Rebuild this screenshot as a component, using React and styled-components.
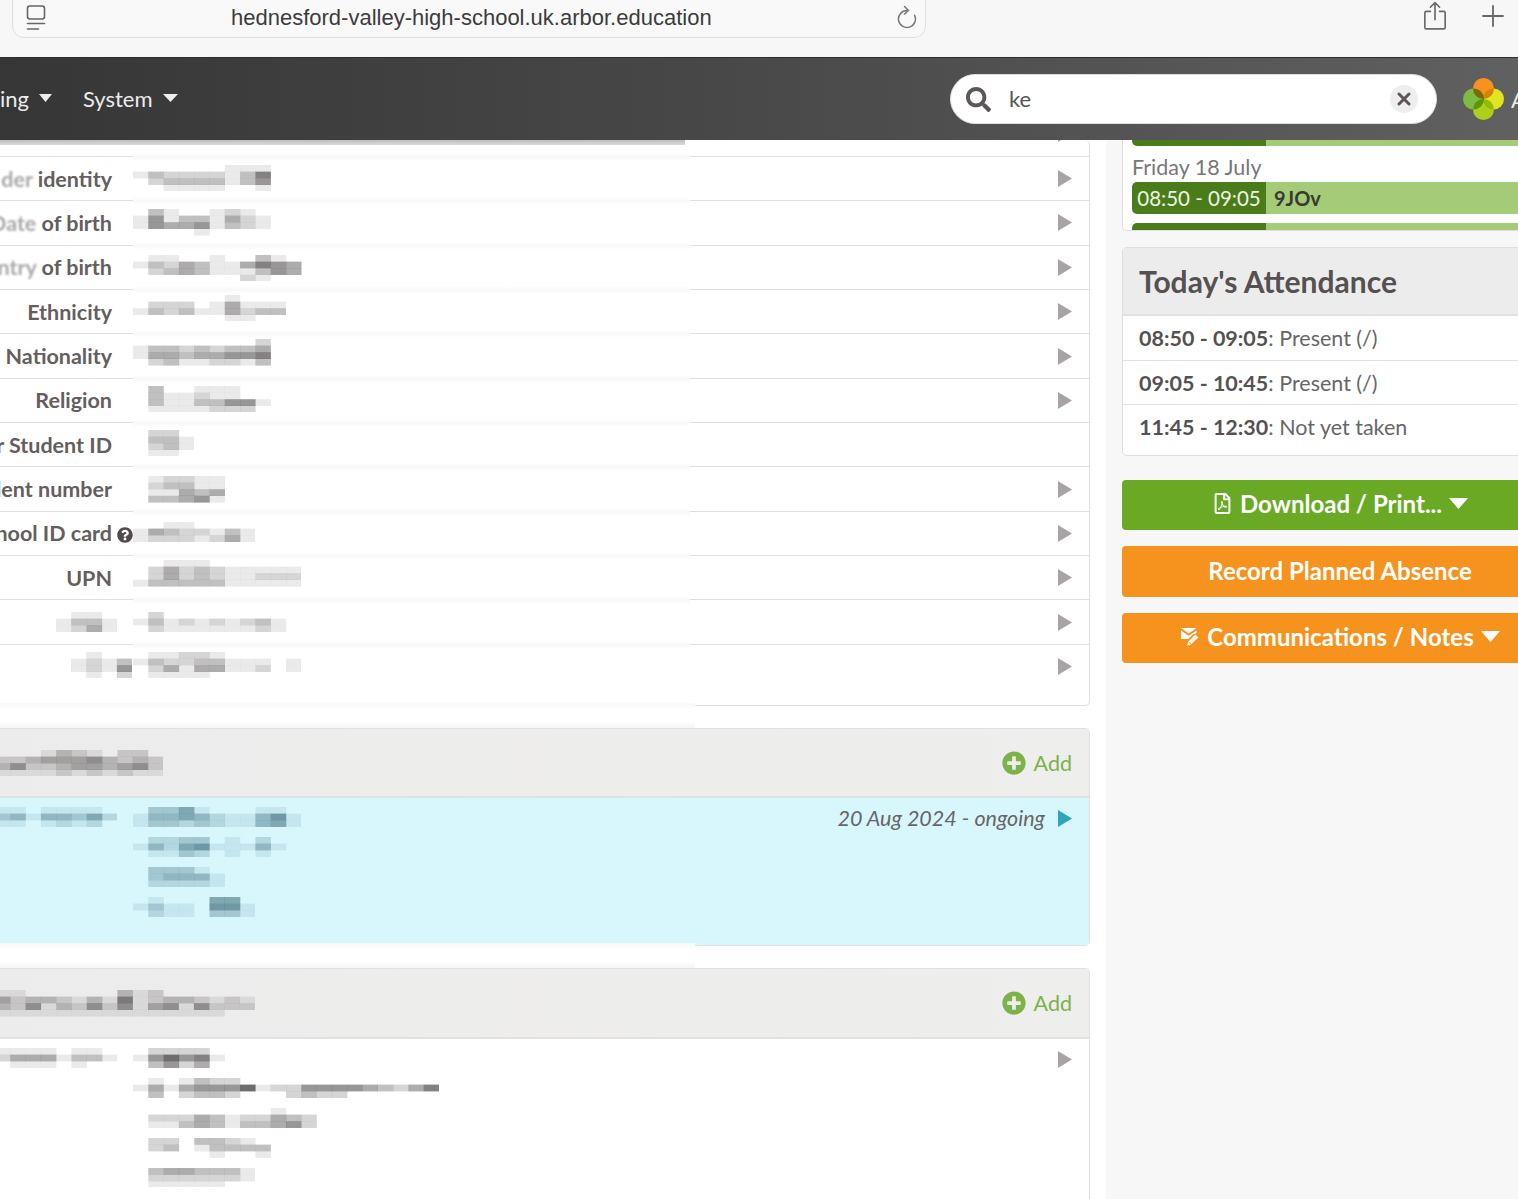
import React from 'react';
import styled, { createGlobalStyle } from 'styled-components';
import { FaSearch, FaPlusCircle, FaQuestionCircle, FaRegFilePdf } from 'react-icons/fa';

const Global = createGlobalStyle`
  html, body { margin: 0; padding: 0; background: #fff; }
  * { box-sizing: border-box; }
`;
const FONT = `"Lato", "Open Sans", sans-serif`;

const Page = styled.div`
  width: 1518px; height: 1199px; overflow: hidden;
  display: flex; flex-direction: column;
  font-family: ${FONT}; font-size: 21.5px; color: #666;
`;
const BrowserBar = styled.div`
  height: 58px; flex: none; background: #f7f7f7; border-bottom: 1px solid #2c2c2c;
  display: flex; align-items: flex-start; padding-left: 12px; color: #666;
`;
const Address = styled.div`
  width: 914px; height: 49px; margin-top: -11px; border: 1px solid #dfdfdf; border-radius: 12px;
  display: flex; align-items: center; padding: 9px 8px 0 12px; background: #f9f9f9;
`;
const Url = styled.span`
  font-family: "Liberation Sans", Arial, sans-serif; font-size: 22px; color: #3c3c3c;
  margin-left: 184px; flex: 1; white-space: nowrap;
`;
const ToolBtn = styled.div`
  display: flex; margin-left: ${p => p.$ml}px; margin-top: ${p => p.$mt}px;
`;
const Header = styled.header`
  height: 82px; flex: none; overflow: hidden; display: flex; align-items: center;
  background: linear-gradient(90deg, #363636, #494949 50%, #606060);
  color: #ececec;
`;
const NavItem = styled.div`
  display: flex; align-items: center; gap: 10px; margin: -2px 0 0 ${p => p.$ml}px; font-size: 22px;
`;
const Search = styled.div`
  margin-left: auto; width: 487px; height: 50px; background: #fff; border-radius: 25px;
  border: 1px solid #ddd; display: flex; align-items: center; padding: 0 18px 0 15px; color: #5c5656;
`;
const SearchText = styled.span` flex: 1; margin: -1px 0 0 18px; font-size: 22px; color: #555; `;
const Clear = styled.div`
  width: 28px; height: 28px; border-radius: 50%; background: #efeeee;
  display: flex; align-items: center; justify-content: center;
`;
const Logo = styled.svg` margin-left: 26px; flex: none; isolation: isolate; `;
const LogoLeaf = styled.circle` mix-blend-mode: multiply; `;
const Clip = styled.div` margin-left: 7px; font-size: 22px; width: 7px; overflow: hidden; `;

const Content = styled.div` flex: 1; display: flex; min-height: 0; `;
const Main = styled.main` width: 1106px; flex: none; background: #fff; overflow: hidden; `;
const Aside = styled.aside` flex: 1; min-width: 0; background: #f7f7f7; padding-left: 16px; `;

const Card = styled.section`
  width: 1092px; margin-left: -2px; background: #fff;
  border: 1px solid #e2e0e0; border-radius: 0 5px 5px 0;
  ${p => p.$top ? 'border-top: 0;' : ''}
  ${p => p.$open ? 'border-bottom: 0; border-radius: 0 5px 0 0;' : ''}
  overflow: hidden;
`;
const BlurBand = styled.div`
  width: 697px; height: ${p => p.$h}px; margin-top: -3px; margin-left: -2px; position: relative;
  background: linear-gradient(#f8f8f8, #fff 7px, #fff calc(100% - 7px), #f5f5f5);
`;
const Grid = styled.div`
  display: grid; grid-template-columns: 134px 557px 1fr;
`;
const Row = styled(Grid)`
  height: ${p => p.$h || 44.36}px;
`;
const LabelCell = styled.div`
  position: relative; display: flex; align-items: ${p => p.$pxTop !== undefined ? 'flex-start' : 'center'};
  justify-content: flex-end; white-space: nowrap;
  padding: ${p => p.$pxTop || 0}px ${p => p.$pr || 21}px 0 0; font-weight: 700; color: #645e5e; overflow: hidden;
  border-bottom: ${p => p.$last ? '0' : '1px solid #e3dede'};
`;
const Faded = styled.span` filter: blur(1.2px); opacity: .55; `;
const ValueCell = styled.div`
  display: flex; align-items: flex-start; padding-top: ${p => p.$pt}px;
  background: linear-gradient(#f8f8f8, #fff 4px, #fff calc(100% - 4px), #f8f8f8);
`;
const ActionCell = styled.div`
  display: flex; align-items: ${p => p.$start ? 'flex-start' : 'center'}; justify-content: flex-end; padding: ${p => p.$start ? 13 : 0}px 17px 0 0;
  border-bottom: ${p => p.$last ? '0' : '1px solid #e3dede'};
`;
const StripeCell = styled.div`
  display: flex; flex-direction: column; background: linear-gradient(#fff, #fff calc(100% - 4px), #f8f8f8);
`;
const Stripe = styled.div`
  height: 5px; width: 552px; background: linear-gradient(#bdbbbb, #dcdcdc);
`;
const LabelStripe = styled(Stripe)` width: 100%; position: absolute; top: 0; left: 0; `;
const PeekChevron = styled.div` margin-top: -28px; `;
const PixelSvg = styled.svg` display: block; flex: none; filter: blur(.7px); `;

const CardHead = styled.div`
  height: ${p => p.$h}px; border-bottom: 2px solid #e2e0e0;
  display: flex; align-items: center; justify-content: space-between; padding-right: 17px;
  background: linear-gradient(90deg, #edecec, #eeeeec);
`;
const HeadTitle = styled.div` margin-left: -4px; `;
const AddLink = styled.div`
  display: flex; align-items: center; gap: 8px; color: #7db249; font-size: 21.5px;
`;
const BodyRow = styled(Grid)`
  background: ${p => p.$bg || '#fff'};
  height: ${p => p.$h}px;
`;
const BodyLabel = styled.div` display: flex; justify-content: flex-end; padding: ${p => p.$pt}px 16px 0 0; `;
const Stack = styled.div` display: flex; flex-direction: column; gap: 10px; padding-top: ${p => p.$pt}px; `;
const BodyAction = styled.div`
  display: flex; justify-content: flex-end; align-items: center; align-self: flex-start; gap: 13px;
  padding: ${p => p.$pt}px 17px 0 0; 
`;
const DateRange = styled.span` font-style: italic; color: #666; white-space: nowrap; line-height: 24px; `;

const SideCard = styled.section`
  width: 430px; border: 1px solid #dfdddd; border-radius: 5px; background: #fff; overflow: hidden;
  ${p => p.$peek ? 'border-top: 0; border-radius: 0 0 5px 5px; height: 91px; margin-bottom: 16px; padding-left: 9px;' : ''}
`;
const Slot = styled.div`
  display: flex; height: ${p => p.$h}px; width: 420px; overflow: hidden; border-radius: ${p => p.$r};
  margin-top: ${p => p.$mt || 0}px;
`;
const SlotTime = styled.div`
  width: 134px; flex: none; background: #4a7d1a; color: #eef5e4; display: flex; align-items: center;
  justify-content: center; white-space: nowrap; font-size: 20.5px;
`;
const SlotName = styled.div`
  flex: 1; background: #a4cb78; color: #3a3a30; font-weight: 700; display: flex; align-items: center; padding-left: 8px; font-size: 20px;
`;
const DayLabel = styled.div` height: 36px; display: flex; align-items: flex-end; line-height: 26px; color: #777; padding-bottom: 2px; `;
const SideHead = styled.div`
  height: 68px; background: #edecec; border-bottom: 2px solid #e2e0e0; padding-left: 16px;
  display: flex; align-items: center; font-size: 30px; font-weight: 700; color: #565151;
`;
const AttRow = styled.div`
  height: ${p => p.$h}px; padding: 0 0 ${p => p.$pb || 0}px 16px; display: flex; align-items: center; color: #666; white-space: pre;
  border-bottom: ${p => p.$last ? '0' : '1px solid #e2e0e0'};
`;
const Strong = styled.strong` font-weight: 700; color: #565151; `;
const Action = styled.button`
  display: flex; align-items: center; justify-content: center; gap: 7px;
  width: 436px; height: 50.3px; margin-top: ${p => p.$mt}px; border: 0; border-radius: 4px;
  background: ${p => p.$bg}; color: #fff; font-family: ${FONT}; font-size: 24px; font-weight: 700;
  padding: 0 0 3px;
`;

function Pixels({ rows, tone = '50,45,45', h = 6.6 }) {
  const w = 15.3;
  const cols = Math.max(...rows.map(r => r.length));
  return (
    <PixelSvg width={cols * w} height={rows.length * h}>
      {rows.flatMap((r, y) => [...r].map((d, x) => d === '0' ? null : (
        <rect key={`${x}-${y}`} x={x * w} y={y * h} width={w + .2} height={h + .2} fill={`rgba(${tone},${Number(d) / 10})`} />
      )))}
    </PixelSvg>
  );
}

const Triangle = ({ w, h, c, dir = 'right' }) => (
  <svg width={w} height={h} viewBox="0 0 10 10" preserveAspectRatio="none" style={{ display: 'block', flex: 'none' }}>
    <path d={dir === 'right' ? 'M0 0 L10 5 L0 10 Z' : 'M0 0 H10 L5 10 Z'} fill={c} />
  </svg>
);
const Chevron = ({ c = '#a8a4a4' }) => <Triangle w={14} h={17} c={c} />;

const SidebarIcon = () => (
  <svg width="22" height="26" viewBox="0 0 22 26" fill="none" stroke="#666" strokeWidth="1.6" strokeLinecap="round">
    <rect x="2.5" y="1" width="17" height="13" rx="2.5" />
    <path d="M2.5 18.5h17M2.5 24h11" />
  </svg>
);
const ReloadIcon = () => (
  <svg width="22" height="26" viewBox="0 0 22 26" fill="none" stroke="#777" strokeWidth="1.5" strokeLinecap="round" strokeLinejoin="round">
    <path d="M12 5.5a8.5 8.5 0 1 0 7.6 4.8" />
    <path d="M9.5 1.5l4 4-4 3.5" />
  </svg>
);
const ShareIcon = () => (
  <svg width="24" height="30" viewBox="0 0 26 32" fill="none" stroke="#6a6a6a" strokeWidth="1.8" strokeLinecap="round" strokeLinejoin="round">
    <path d="M8 11H3.5a1.5 1.5 0 0 0-1.5 1.5v16A1.5 1.5 0 0 0 3.5 30h19a1.5 1.5 0 0 0 1.5-1.5v-16a1.5 1.5 0 0 0-1.5-1.5H18" />
    <path d="M13 20V2M8 6.5L13 1.5l5 5" />
  </svg>
);
const PlusIcon = () => (
  <svg width="22" height="22" viewBox="0 0 22 22" stroke="#666" strokeWidth="1.8" strokeLinecap="round">
    <path d="M11 1v20M1 11h20" />
  </svg>
);
const XIcon = () => (
  <svg width="14" height="14" viewBox="0 0 14 14" stroke="#5c5656" strokeWidth="3" strokeLinecap="round">
    <path d="M2 2l10 10M12 2L2 12" />
  </svg>
);
const MailIcon = () => (
  <svg width="20" height="20" viewBox="0 0 20 20" fill="#fff">
    <path d="M1 1h15.5L8.7 6.6z" />
    <path d="M1 3.4V12h7.2l4.4-4.3 4-1.8V3.4L8.7 8.8z" />
    <path d="M15.4 7.6l3 2.8-7.6 7.4-3.6.9.8-3.7z" opacity=".92" />
    <path d="M9.2 15.4l3 2.8" stroke="#f6931e" strokeWidth=".9" />
  </svg>
);

function QuestionMark() {
  return <QHolder><FaQuestionCircle size={16} color="#504a4a" /></QHolder>;
}
const QHolder = styled.span` position: absolute; right: 0; top: 15px; display: flex; `;
const LabelText = styled.span` white-space: pre; `;

const rows = [
  { label: <><Faded>der</Faded> identity</>, pt: 8, px: ['000000111', '132222136', '023333135', '001111001'] },
  { label: <><Faded>Date</Faded> of birth</>, pt: 8, px: ['031001210', '151331421', '154451321', '000010000'] },
  { label: <><Faded>ntry</Faded> of birth</>, pt: 9, px: ['011001003100', '132431146540', '023431113540', '000000021000'] },
  { label: 'Ethnicity', pt: 5, px: ['0000001000', '0222014111', '1323114233', '0000001100'] },
  { label: 'Nationality', pt: 5, px: ['000000002', '133232334', '144344556', '023112213'] },
  { label: 'Religion', pt: 7, px: ['030011100', '031121100', '031133551', '011112220'] },
  { label: 'r Student ID', pt: 7, px: ['0220', '0331', '0231', '0110'], noArrow: true },
  { label: 'lent number', pt: 9, px: ['012211', '023311', '011434', '033451'] },
  { label: <>hool ID card<QuestionMark /></>, pt: 10, px: ['00110000', '14322131', '12221241'] },
  { label: 'UPN', pt: 4, px: ['00111000000', '02423211111', '02423211222', '13333311111'] },
  { pxLabel: ['0110', '1331', '1241'], lblPt: 12, lblPr: 16, pt: 12, px: ['02000000000', '13121212310', '02111111210'] },
  { pxLabel: ['0100', '1213', '1215', '0102'], lblPt: 7, lblPr: 1, pt: 7, px: ['01122100000', '13223311101', '02414411201', '01111000000'], last: true },
];

const stackA = [
  ['03351000110', '14454211461', '13323211451'],
  ['02233010200', '14256111410', '01132010100'],
  ['033310', '034441', '022221'],
  ['01000550', '13110661', '02110331'],
];
const stackB = [
  ['022220', '157561', '035240'],
  ['01013220000000000000', '14145557122555543246', '03023320002322000000'],
  ['000000000100', '022243122432', '011343133452'],
  ['0220332100', '0230133330', '0000010010'],
  ['03443331', '02222221', '01111100'],
];

export default function App() {
  return (
    <Page>
      <Global />
      <BrowserBar>
        <Address>
          <SidebarIcon />
          <Url>hednesford-valley-high-school.uk.arbor.education</Url>
          <ReloadIcon />
        </Address>
        <ToolBtn $ml={497} $mt={1}><ShareIcon /></ToolBtn>
        <ToolBtn $ml={35} $mt={5}><PlusIcon /></ToolBtn>
      </BrowserBar>

      <Header>
        <NavItem $ml={0}>ing <Triangle w={13} h={8} c="#eee" dir="down" /></NavItem>
        <NavItem $ml={31}>System <Triangle w={15} h={8} c="#eee" dir="down" /></NavItem>
        <Search>
          <FaSearch size={25} />
          <SearchText>ke</SearchText>
          <Clear><XIcon /></Clear>
        </Search>
        <Logo width="41" height="42" viewBox="0 0 41 42">
          <LogoLeaf cx="10.5" cy="21" r="10.5" fill="#7fbb42" />
          <LogoLeaf cx="30.5" cy="21" r="10.5" fill="#dfe520" />
          <LogoLeaf cx="20.5" cy="31.5" r="10.5" fill="#aece1c" />
          <LogoLeaf cx="20.5" cy="10.5" r="10.5" fill="#f6921e" />
        </Logo>
        <Clip>A</Clip>
      </Header>

      <Content>
        <Main>
          <Card $top>
            <Row $h={16.9}>
              <LabelCell><LabelStripe /></LabelCell>
              <StripeCell><Stripe /></StripeCell>
              <ActionCell><PeekChevron><Chevron /></PeekChevron></ActionCell>
            </Row>
            {rows.map((r, i) => (
              <Row key={i} $h={r.last ? 60.6 : undefined}>
                {r.pxLabel
                  ? <LabelCell $pxTop={r.lblPt} $pr={r.lblPr} $last={r.last}><Pixels rows={r.pxLabel} /></LabelCell>
                  : <LabelCell><LabelText>{r.label}</LabelText></LabelCell>}
                <ValueCell $pt={r.pt}><Pixels rows={r.px} /></ValueCell>
                <ActionCell $last={r.last} $start={r.last}>{!r.noArrow && <Chevron />}</ActionCell>
              </Row>
            ))}
          </Card>
          <BlurBand $h={25} />
          <Card>
            <CardHead $h={69}>
              <HeadTitle>
                <Pixels rows={['00013210220', '22344453232', '35223443452', '11112121211']} />
              </HeadTitle>
              <AddLink><FaPlusCircle size={24} />Add</AddLink>
            </CardHead>
            <BodyRow $bg="#d7f7fd" $h={147}>
              <BodyLabel $pt={9}><Pixels tone="40,90,105" rows={['11011110', '34144352', '11012120']} /></BodyLabel>
              <Stack $pt={9}>
                {stackA.map((s, i) => <Pixels key={i} tone="40,90,105" rows={s} />)}
              </Stack>
              <BodyAction $pt={8}>
                <DateRange>20 Aug 2024 - ongoing</DateRange>
                <Chevron c="#2aa6bd" />
              </BodyAction>
            </BodyRow>
          </Card>
          <BlurBand $h={25} />
          <Card $open>
            <CardHead $h={70}>
              <HeadTitle>
                <Pixels rows={['11000000312000000', '42332131612332121', '32513252514515222', '11111111111111100']} />
              </HeadTitle>
              <AddLink><FaPlusCircle size={24} />Add</AddLink>
            </CardHead>
            <BodyRow $h={200}>
              <BodyLabel $pt={9}><Pixels rows={['11110110', '24441331', '01110100']} /></BodyLabel>
              <Stack $pt={9}>
                {stackB.map((s, i) => <Pixels key={i} rows={s} />)}
              </Stack>
              <BodyAction $pt={12}><Chevron /></BodyAction>
            </BodyRow>
          </Card>
        </Main>

        <Aside>
          <SideCard $peek>
            <Slot $h={6} $r="0 0 0 5px"><SlotTime /><SlotName /></Slot>
            <DayLabel>Friday 18 July</DayLabel>
            <Slot $h={32} $r="5px 0 0 5px">
              <SlotTime>08:50 - 09:05</SlotTime>
              <SlotName>9JOv</SlotName>
            </Slot>
            <Slot $h={9} $r="5px 0 0 0" $mt={9}><SlotTime /><SlotName /></Slot>
          </SideCard>
          <SideCard>
            <SideHead>Today's Attendance</SideHead>
            <AttRow $h={45}><Strong>08:50 - 09:05</Strong>: Present (/)</AttRow>
            <AttRow $h={44}><Strong>09:05 - 10:45</Strong>: Present (/)</AttRow>
            <AttRow $h={50} $pb={6} $last><Strong>11:45 - 12:30</Strong>: Not yet taken</AttRow>
          </SideCard>
          <Action $bg="#69a924" $mt={24}>
            <FaRegFilePdf size={21} />Download / Print... <Triangle w={19} h={11} c="#fff" dir="down" />
          </Action>
          <Action $bg="#f6931e" $mt={16.2}>Record Planned Absence</Action>
          <Action $bg="#f6931e" $mt={16.2}>
            <MailIcon />Communications / Notes <Triangle w={19} h={11} c="#fff" dir="down" />
          </Action>
        </Aside>
      </Content>
    </Page>
  );
}
